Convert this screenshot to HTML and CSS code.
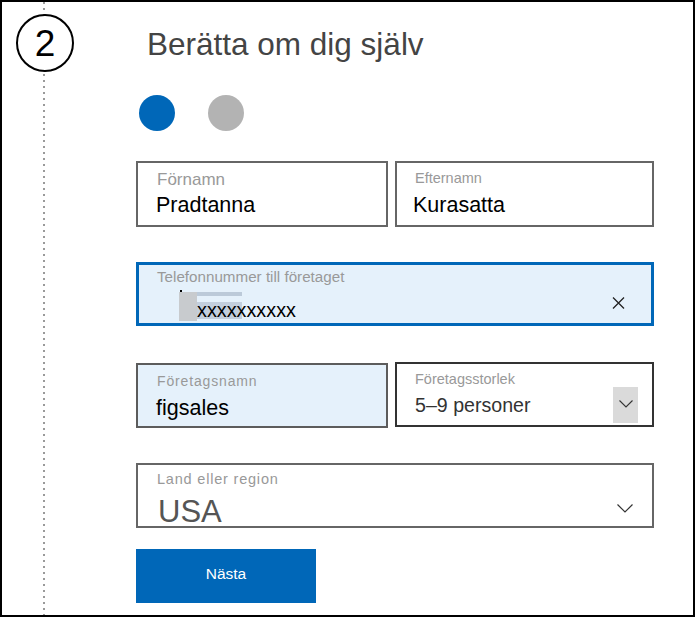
FILE: index.html
```html
<!DOCTYPE html>
<html lang="sv">
<head>
<meta charset="utf-8">
<title>Berätta om dig själv</title>
<link rel="stylesheet" href="styles.css">
</head>
<body>
<div class="frame">
  <div class="rail">
    <div class="step">2</div>
  </div>
  <div class="main">
    <h1 class="title">Berätta om dig själv</h1>
    <div class="dots"><span class="dot dot-on"></span><span class="dot"></span></div>

    <div class="row row-1">
      <div class="field field-a">
        <div class="label label-big">Förnamn</div>
        <div class="value">Pradtanna</div>
      </div>
      <div class="field field-b">
        <div class="label label-small">Efternamn</div>
        <div class="value">Kurasatta</div>
      </div>
    </div>

    <div class="field phone">
      <div class="label label-phone">Telefonnummer till företaget</div>
      <div class="phone-row">
        <div class="caret">
          <span class="caret-dot"></span>
          <span class="caret-block"></span>
        </div>
        <div class="typed">
          <span class="typed-bar"></span>
          <span class="typed-text">xxxxxxxxxx</span>
        </div>
        <svg class="clear" width="13" height="12" viewBox="0 0 13 12" aria-hidden="true">
          <path d="M1 0.5 L12 11.5 M12 0.5 L1 11.5" stroke="#222" stroke-width="1.3" fill="none"/>
        </svg>
      </div>
    </div>

    <div class="row row-3">
      <div class="field company">
        <div class="label label-light">Företagsnamn</div>
        <div class="value value-company">figsales</div>
      </div>
      <div class="field size">
        <div class="size-text">
          <div class="label label-small">Företagsstorlek</div>
          <div class="value value-size">5–9 personer</div>
        </div>
        <div class="size-btn">
          <svg width="14" height="8" viewBox="0 0 14 8" aria-hidden="true">
            <path d="M0.5 0.5 L7 7 L13.5 0.5" stroke="#333" stroke-width="1.1" fill="none"/>
          </svg>
        </div>
      </div>
    </div>

    <div class="field country">
      <div class="country-text">
        <div class="label label-light label-country">Land eller region</div>
        <div class="value value-country">USA</div>
      </div>
      <svg class="country-chev" width="16" height="9" viewBox="0 0 16 9" aria-hidden="true">
        <path d="M0.5 0.5 L8 8 L15.5 0.5" stroke="#333" stroke-width="1.2" fill="none"/>
      </svg>
    </div>

    <button class="next" type="button">Nästa</button>
  </div>
</div>
</body>
</html>
```

FILE: styles.css
```css
* { box-sizing: border-box; }

html, body {
  margin: 0;
  padding: 0;
  background: #fff;
}

body {
  font-family: "Liberation Sans", Arial, sans-serif;
  color: #000;
}

.frame {
  width: 695px;
  height: 617px;
  border: 2px solid #000;
  display: flex;
  overflow: hidden;
}

.rail {
  width: 134px;
  flex: none;
  padding-top: 12px;
  background-image: repeating-linear-gradient(to bottom, #9a9a9a 0 2px, transparent 2px 6px);
  background-size: 2px 100%;
  background-position: 41px 0;
  background-repeat: no-repeat;
}

.step {
  width: 58px;
  height: 58px;
  margin-left: 14px;
  border: 2px solid #000;
  border-radius: 50%;
  background: #fff;
  display: flex;
  align-items: center;
  justify-content: center;
  font-size: 37px;
  line-height: 1;
  color: #000;
  padding-top: 1px;
}

.main {
  flex: 1;
  padding-top: 24px;
  display: flex;
  flex-direction: column;
  align-items: flex-start;
}

.title {
  margin: 0 0 0 11px;
  font-size: 31.5px;
  line-height: 36px;
  font-weight: 400;
  color: #444;
}

.dots {
  margin: 33px 0 0 3px;
  display: flex;
  gap: 33px;
}

.dot {
  width: 36px;
  height: 36px;
  border-radius: 50%;
  background: #b3b3b3;
}

.dot-on { background: #0067b8; }

.row {
  display: flex;
  gap: 7px;
  width: 518px;
}

.row-1 { margin-top: 30px; }
.row-3 { margin-top: 36px; }

.field {
  border: 2px solid #666;
  background: #fff;
  overflow: hidden;
}

.label {
  color: #999;
  white-space: nowrap;
}

.value {
  font-size: 21.5px;
  line-height: 26px;
  color: #000;
  white-space: nowrap;
}

/* Row 1 */
.field-a, .field-b {
  height: 66px;
  padding-top: 6px;
}

.field-a { width: 252px; padding-left: 19px; }
.field-b { width: 259px; padding-left: 18px; }

.label-big {
  font-size: 17px;
  line-height: 20px;
  margin-top: 1px;
  margin-bottom: 2px;
  margin-left: 0;
}

.field-a .value { margin-left: -1px; }
.field-b .value { margin-left: -2px; }

.label-small {
  font-size: 14.5px;
  line-height: 18px;
  margin-bottom: 5px;
}

/* Phone */
.phone {
  margin-top: 35px;
  width: 518px;
  height: 64px;
  border: 3px solid #0067b8;
  background: #e5f1fb;
  padding: 3px 0 0 18px;
}

.label-phone {
  font-size: 15.2px;
  line-height: 18px;
}

.phone-row {
  display: flex;
  margin-top: 4px;
  margin-left: 22px;
}

.caret {
  display: flex;
  flex-direction: column;
  width: 18px;
}

.caret-dot {
  width: 2px;
  height: 2px;
  margin-left: 1px;
  background: #000;
}

.caret-block {
  width: 18px;
  height: 29px;
  background: #c8cbce;
}

.typed {
  display: flex;
  flex-direction: column;
  padding-top: 2px;
}

.typed-bar {
  width: 45px;
  height: 4px;
  background: #bccad9;
}

.typed-text {
  display: block;
  margin-top: 6px;
  height: 17px;
  font-size: 19.8px;
  line-height: 17px;
  color: #000;
  background: linear-gradient(#c3cfdd, #c3cfdd) no-repeat 0 0 / 45px 100%;
}

.clear {
  margin-left: auto;
  margin-right: 26px;
  margin-top: 7px;
  flex: none;
}

/* Row 3 */
.company {
  width: 252px;
  height: 65px;
  margin-top: 1px;
  background: #e5f1fb;
  border-color: #5c5c5c;
  padding: 7px 0 0 19px;
}

.label-light {
  font-size: 14px;
  line-height: 18px;
  letter-spacing: 0.85px;
  color: #999;
}

.value-company {
  margin-top: 5px;
  margin-left: -1px;
}

.size {
  width: 259px;
  height: 65px;
  border-color: #333;
  display: flex;
  padding: 6px 14px 2px 18px;
}

.size-text { flex: 1; }

.value-size {
  font-size: 19.6px;
  line-height: 24px;
  color: #333;
  margin-top: 4px;
}

.size-btn {
  align-self: flex-end;
  width: 25px;
  height: 36px;
  background: #dadada;
  display: flex;
  align-items: center;
  justify-content: center;
  padding-bottom: 2px;
}

/* Country */
.country {
  margin-top: 35px;
  width: 518px;
  height: 65px;
  display: flex;
  padding: 5px 19px 0 19px;
}

.country-text { flex: 1; }

.label-country {
  font-size: 14.5px;
  letter-spacing: 0.8px;
}

.value-country {
  font-size: 31px;
  line-height: 32px;
  color: #555;
  margin-top: 8px;
  margin-left: 1px;
}

.country-chev {
  flex: none;
  margin-top: 34px;
}

/* Button */
.next {
  margin-top: 21px;
  width: 180px;
  height: 54px;
  border: 0;
  padding: 0 0 4px;
  background: #0067b8;
  color: #fff;
  font-family: "Liberation Sans", Arial, sans-serif;
  font-size: 15.5px;
  display: flex;
  align-items: center;
  justify-content: center;
}
```
